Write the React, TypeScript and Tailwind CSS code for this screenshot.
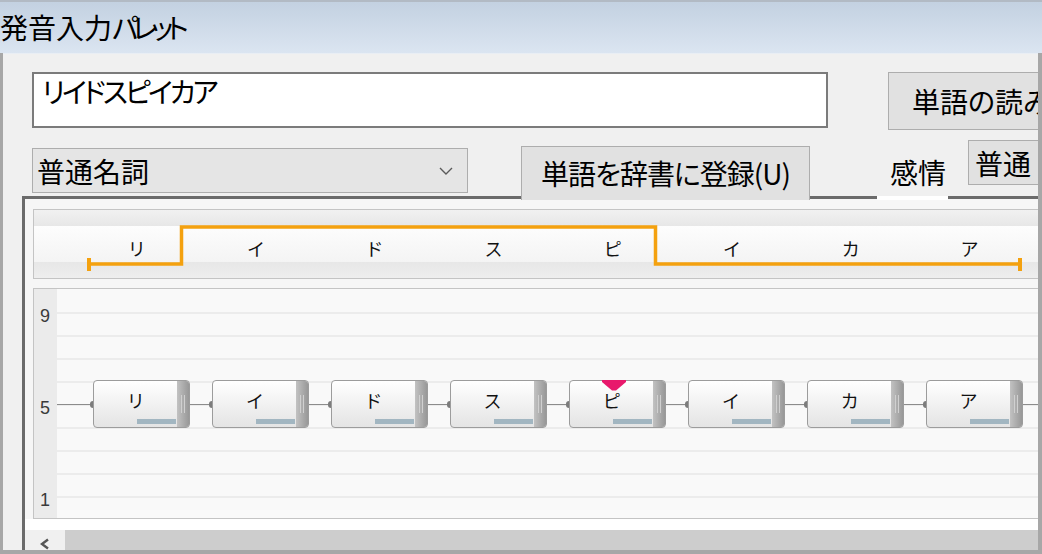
import React from "react";

const KANA = ["リ", "イ", "ド", "ス", "ピ", "イ", "カ", "ア"];

function Connector({ first }: { first?: boolean }) {
  return (
    <div className={first ? "flex w-[36px] shrink-0 items-center" : "flex w-[22px] shrink-0 items-center"}>
      <div className="h-px flex-1 bg-[#8c8c8c]" />
      <div className="h-[7px] w-[3px] rounded-l-full bg-[#7c7c7c]" />
    </div>
  );
}

function Node({ k, marker }: { k: string; marker?: boolean }) {
  return (
    <div className="relative flex h-[48px] w-[97px] shrink-0 rounded-[4px] border border-[#9c9c9c] bg-linear-to-b from-[#ffffff] to-[#e4e4e4]">
      <div className="flex flex-1 flex-col">
        <div className="flex h-[38px] items-center justify-center text-[18px] leading-none text-[#111]">{k}</div>
        <div className="ml-auto mr-[1px] h-[5px] w-[39px] bg-[#a2b6c1]" />
      </div>
      <div className="flex w-[12px] items-center justify-center gap-[2px] rounded-r-[3px] bg-linear-to-r from-[#c2c2c2] to-[#989898]">
        <div className="h-[18px] w-px bg-[#d0d0d0]" />
        <div className="h-[18px] w-px bg-[#d0d0d0]" />
      </div>
      {marker && (
        <svg className="absolute left-[32px] top-[-1px]" width="24" height="11" viewBox="0 0 24 11">
          <path d="M0 0 H24 V2 L14 10.5 H10 L0 2 Z" fill="#e8196c" />
        </svg>
      )}
    </div>
  );
}

export default function App() {
  return (
    <div className="flex h-[554px] w-[1042px] flex-col overflow-hidden bg-[#a7a7a7] font-['Noto_Sans_CJK_JP','Noto_Sans_CJK_SC',sans-serif] text-black [font-feature-settings:'palt']">
      {/* Title bar */}
      <div className="flex h-[53px] shrink-0 items-center border-t-2 border-[#b2bac4] bg-linear-to-b from-[#c3d1e1] to-[#dbe5f1] pb-[2px] text-[28px] leading-none">
        <span>発音入力</span>
        <span className="tracking-[-6px]">パレット</span>
      </div>

      {/* Body */}
      <div className="mb-[4px] ml-[3px] mr-[4px] flex flex-1 flex-col overflow-hidden border-t border-[#e9eef4] bg-[#f0f0f0]">
        {/* Row 1 */}
        <div className="mt-[18px] flex h-[58px] shrink-0 items-start">
          <div className="ml-[29px] h-[56px] w-[796px] shrink-0 border-2 border-[#7b7b7b] bg-white pl-[8px] pt-[1px] text-[28px] leading-[32px] tracking-[-3px]">
            リイドスピイカア
          </div>
          <div className="ml-[60px] flex h-[58px] w-[180px] shrink-0 items-center border border-[#adadad] bg-[#e1e1e1] pl-[23px] text-[28px] leading-none">
            単語の読み
          </div>
        </div>

        {/* Row 2 */}
        <div className="relative z-10 mt-[10px] flex h-[60px] shrink-0 items-start">
          <div className="ml-[29px] mt-[8px] flex h-[45px] w-[436px] shrink-0 items-center border border-[#adadad] bg-[#e5e5e5] pl-[4px] text-[28px] leading-none">
            <span>普通名詞</span>
            <svg className="ml-auto mr-[14px]" width="14" height="8" viewBox="0 0 14 8">
              <path d="M1 1 L7 7 L13 1" fill="none" stroke="#5a5a5a" strokeWidth="1.4" />
            </svg>
          </div>
          <div className="ml-[53px] mt-[6px] flex h-[54px] w-[289px] shrink-0 items-center justify-center border-x border-t border-[#adadad] bg-[#e1e1e1] pb-[2px] text-[28px] leading-none tracking-[-1px]">
            単語を辞書に登録(U)
          </div>
          <div className="ml-[80px] flex h-[60px] w-[56px] shrink-0 flex-col">
            <div className="mt-[14px] text-[28px] leading-[36px]">感情</div>
            <div className="-ml-[13px] mt-auto h-[4px] w-[71px] bg-white" />
          </div>
          <div className="ml-[22px] flex h-[45px] w-[90px] shrink-0 items-center border border-[#adadad] bg-[#e1e1e1] pl-[6px] text-[28px] leading-none">
            普通
          </div>
        </div>

        {/* Panel */}
        <div className="-mt-[4px] ml-[19px] flex flex-1 flex-col overflow-hidden border-l-[3px] border-t-[3px] border-[#6b6b6b] bg-[#f6f6f6] pt-[10px]">
          {/* Pitch accent box */}
          <div className="relative ml-[8px] flex h-[70px] w-[1010px] shrink-0 flex-col border border-[#c4c4c4]">
            <div className="h-[16px] bg-linear-to-b from-[#f1f1f1] to-[#e7e7e7]" />
            <div className="flex h-[36px] items-center bg-linear-to-b from-[#fdfdfd] to-[#f4f4f4] pl-[43px] pt-[8px]">
              {KANA.map((k, i) => (
                <div key={i} className="w-[119px] shrink-0 text-center text-[18px] leading-none text-[#111]">
                  {k}
                </div>
              ))}
            </div>
            <div className="flex-1 bg-linear-to-b from-[#e7e7e7] to-[#eeeeee]" />
            <svg className="absolute left-0 top-0" width="1008" height="68" viewBox="0 0 1008 68">
              <path d="M55 54 H147.5 V17 H621.5 V54 H985.5" fill="none" stroke="#f4a10f" strokeWidth="3.5" />
              <rect x="53" y="48" width="4" height="13" fill="#f4a10f" />
              <rect x="984" y="48" width="4" height="13" fill="#f4a10f" />
            </svg>
          </div>

          {/* Graph box */}
          <div className="ml-[8px] mt-[9px] flex h-[231px] w-[1010px] shrink-0 border border-[#c4c4c4] bg-[#f9f9f9]">
            <div className="flex w-[23px] shrink-0 flex-col bg-[#ebebeb] pt-[15px] font-['Liberation_Sans',sans-serif] text-[18px] text-[#3a3a3a]">
              {["9", "", "", "", "5", "", "", "", "1"].map((n, i) => (
                <div key={i} className="flex h-[23px] shrink-0 items-center pl-[6px] leading-none">
                  {n}
                </div>
              ))}
            </div>
            <div className="relative flex flex-1 flex-col pt-[2px]">
              {Array.from({ length: 9 }).map((_, i) => (
                <div key={i} className="h-[23px] shrink-0 border-b-2 border-[#ececec]" />
              ))}
              <div className="absolute left-0 right-0 top-[91px] flex h-[48px] items-center">
                {KANA.map((k, i) => (
                  <React.Fragment key={i}>
                    <Connector first={i === 0} />
                    <Node k={k} marker={i === 4} />
                  </React.Fragment>
                ))}
                <div className="h-px flex-1 bg-[#8c8c8c]" />
              </div>
            </div>
          </div>

          <div className="h-[11px] shrink-0 bg-white" />

          {/* Scrollbar */}
          <div className="flex h-[20px] shrink-0 bg-[#cdcdcd]">
            <div className="flex w-[40px] shrink-0 justify-center bg-[#f0f0f0] pt-[8px]">
              <svg width="12" height="12" viewBox="0 0 12 12">
                <path d="M9 1.5 L3 6 L9 10.5" fill="none" stroke="#555555" strokeWidth="2.4" />
              </svg>
            </div>
          </div>
        </div>
      </div>
    </div>
  );
}
